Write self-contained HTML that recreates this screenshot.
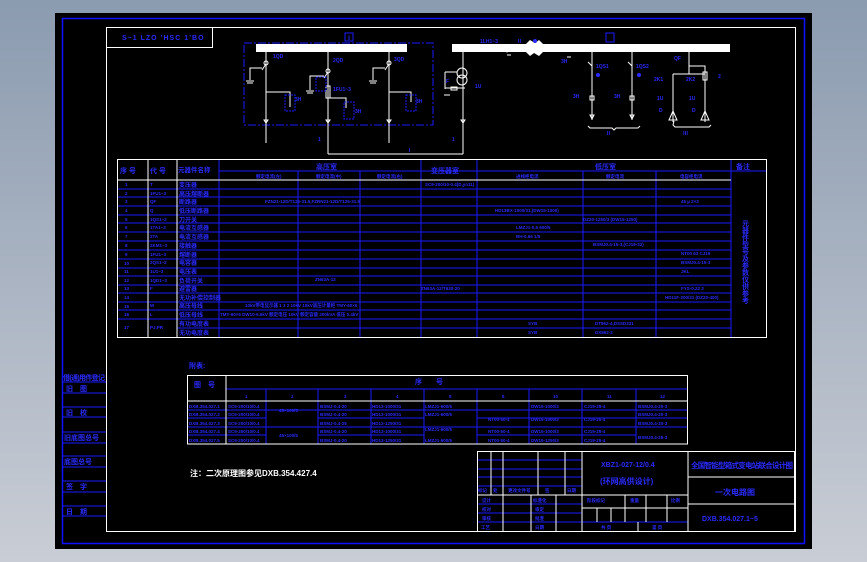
<!DOCTYPE html>
<html><head><meta charset="utf-8"><style>
html,body{margin:0;padding:0;width:867px;height:562px;overflow:hidden;background:linear-gradient(#8b9bb0,#c9cdd5);}
svg{position:absolute;left:0;top:0;font-family:"Liberation Sans","Noto Sans CJK SC",sans-serif;}
svg text{font-weight:bold;}
</style></head><body>
<svg width="867" height="562" viewBox="0 0 867 562">
<rect x="55" y="13" width="757" height="536" fill="#000"/>
<rect x="62.5" y="18.5" width="742" height="525" fill="none" stroke="#1010ff" stroke-width="1.5"/>
<rect x="106.5" y="27.5" width="689" height="504" fill="none" stroke="#fff" stroke-width="1"/>
<rect x="106.5" y="27.5" width="106" height="20" fill="none" stroke="#fff"/>
<text x="122" y="40" font-size="7" fill="#2a2aff" letter-spacing="1">S~1 LZO ’HSC 1’BO</text>

<g stroke="#1a1aff" stroke-width="1">
<line x1="62" y1="382" x2="106" y2="382"/><line x1="62" y1="393" x2="106" y2="393"/>
<line x1="62" y1="407" x2="106" y2="407"/><line x1="62" y1="417" x2="106" y2="417"/>
<line x1="62" y1="432" x2="106" y2="432"/><line x1="62" y1="443" x2="106" y2="443"/>
<line x1="62" y1="456" x2="106" y2="456"/><line x1="62" y1="467" x2="106" y2="467"/>
<line x1="62" y1="481" x2="106" y2="481"/><line x1="62" y1="492" x2="106" y2="492"/>
<line x1="62" y1="506" x2="106" y2="506"/><line x1="62" y1="516" x2="106" y2="516"/>
</g>
<g fill="#2a2aff" font-size="7">
<text x="63" y="380" textLength="42">借(通)用件登记</text>
<text x="66" y="391">旧　图</text>
<text x="66" y="415">旧　校</text>
<text x="64" y="440">旧底图总号</text>
<text x="64" y="464">底图总号</text>
<text x="66" y="489">签　字</text>
<text x="66" y="514">日　期</text>
</g>

<rect x="244" y="43" width="189" height="82" fill="none" stroke="#1a1aff" stroke-dasharray="8,2,2,2"/>
<rect x="256" y="44" width="151" height="8" fill="#fff"/>
<rect x="345" y="33" width="8" height="8" fill="none" stroke="#1a1aff"/>
<text x="346" y="40" font-size="6" fill="#2a2aff">Ⅰ</text>
<g stroke="#fff" fill="none" stroke-width="1">
<line x1="266" y1="52" x2="266" y2="143"/><line x1="328" y1="52" x2="328" y2="154"/><line x1="389" y1="52" x2="389" y2="143"/>
<line x1="328" y1="154" x2="463" y2="154"/><line x1="463" y1="52" x2="463" y2="154"/>
<path d="M266 64 l-4 6 M262 68 h-12 v12 M389 64 l-4 6 M385 68 h-12 v12 M328 72 l-4 6 M324 76 h-14 v14"/>
<path d="M266 92 h24 v15 M389 92 h22 v10 M328 98 h18 v10"/>
<rect x="326" y="86" width="4" height="12"/>
<circle cx="266" cy="63" r="2"/><circle cx="389" cy="63" r="2"/><circle cx="328" cy="71" r="2"/>
<path d="M246 81 h8 M247 83 h6 M369 81 h8 M370 83 h6 M306 91 h8 M307 93 h6"/>
<path d="M264 120 l2 3 l2 -3z M326 120 l2 3 l2 -3z M387 120 l2 3 l2 -3z M461 120 l2 3 l2 -3z"/>
</g>
<g fill="none" stroke="#1a1aff" stroke-dasharray="2,1">
<rect x="285" y="95" width="10" height="16"/><rect x="406" y="95" width="10" height="16"/><rect x="344" y="102" width="10" height="17"/><rect x="316" y="77" width="10" height="14"/>
</g>
<g fill="#2a2aff" font-size="5">
<text x="273" y="58">1QD</text><text x="333" y="62">2QD</text><text x="394" y="61">3QD</text>
<text x="333" y="91">1FU1~3</text><text x="295" y="101">3H</text><text x="355" y="113">3H</text><text x="416" y="103">3H</text>
<text x="318" y="141">1</text><text x="452" y="141">1</text><text x="407" y="152">Ⅰ</text>
</g>

<rect x="452" y="44" width="278" height="8" fill="#fff"/>
<path d="M526 44 l4 -4 l5 3 l4 -3 l4 4 v8 l-4 4 l-5 -3 l-4 3 l-4 -4z" fill="#fff"/>
<circle cx="535" cy="41" r="2" fill="#2a2aff"/>
<rect x="606" y="33" width="8" height="9" fill="none" stroke="#1a1aff"/>
<g stroke="#fff" fill="none">
<circle cx="462" cy="73" r="5"/><circle cx="462" cy="80" r="5"/>
<path d="M445 72 h12 M445 72 v17 M445 88 h20 M444 95 h6"/>
<rect x="451" y="87" width="6" height="3"/>
<line x1="592" y1="52" x2="592" y2="120"/><line x1="632" y1="52" x2="632" y2="120"/>
<path d="M592 66 l-4 -4 M632 66 l-4 -4"/>
<rect x="590" y="96" width="4" height="4"/><rect x="630" y="96" width="4" height="4"/>
<path d="M590 115 l2 4 l2 -4z M630 115 l2 4 l2 -4z"/>
<path d="M588 126 l2 2 h22 l2 2 l2 -2 h22 l2 -2"/>
<line x1="689" y1="52" x2="689" y2="74"/><path d="M689 66 h16 v18 M703 72 h4 v8 h-4z"/>
<path d="M673 74 h32 M673 74 v48 M705 74 v48"/>
<path d="M669 120 l4 -9 l4 9 z M701 120 l4 -9 l4 9z M674 121 l-1 4 l2 2 h34 l2 -2"/>
<path d="M507 48 l-2 2 l2 2 l2 -2z M507 55 h4 M567 57 h4"/>
</g>
<circle cx="598" cy="75" r="2" fill="#2a2aff"/><circle cx="639" cy="75" r="2" fill="#2a2aff"/>
<g fill="#2a2aff" font-size="5">
<text x="480" y="43">1LH1~3</text><text x="517" y="43">Ⅱ</text><text x="561" y="63">3H</text>
<text x="596" y="68">1QS1</text><text x="636" y="68">1QS2</text><text x="573" y="98">3H</text><text x="614" y="98">3H</text>
<text x="475" y="88">1U</text><text x="446" y="83">F</text><text x="674" y="60">QF</text><text x="718" y="78">2</text>
<text x="654" y="81">2K1</text><text x="686" y="81">2K2</text><text x="657" y="100">1U</text><text x="689" y="100">1U</text>
<text x="659" y="112">D</text><text x="692" y="112">D</text><text x="606" y="135">Ⅱ</text><text x="683" y="135">Ⅲ</text>
</g>

<g stroke="#1a1aff" stroke-width="1">
<line x1="219" y1="171" x2="766" y2="171"/>
<line x1="117" y1="189" x2="731" y2="189"/><line x1="117" y1="197" x2="731" y2="197"/><line x1="117" y1="206" x2="731" y2="206"/>
<line x1="117" y1="215" x2="731" y2="215"/><line x1="117" y1="223" x2="731" y2="223"/><line x1="117" y1="232" x2="731" y2="232"/>
<line x1="117" y1="241" x2="731" y2="241"/><line x1="117" y1="250" x2="731" y2="250"/><line x1="117" y1="259" x2="731" y2="259"/>
<line x1="117" y1="268" x2="731" y2="268"/><line x1="117" y1="276" x2="731" y2="276"/><line x1="117" y1="285" x2="731" y2="285"/>
<line x1="117" y1="293" x2="731" y2="293"/><line x1="117" y1="302" x2="731" y2="302"/><line x1="117" y1="310" x2="731" y2="310"/>
<line x1="117" y1="319" x2="731" y2="319"/><line x1="177" y1="328" x2="731" y2="328"/>
<line x1="219" y1="159" x2="219" y2="337"/><line x1="298" y1="171" x2="298" y2="337"/><line x1="360" y1="171" x2="360" y2="337"/>
<line x1="421" y1="159" x2="421" y2="337"/><line x1="477" y1="159" x2="477" y2="337"/><line x1="583" y1="171" x2="583" y2="337"/>
<line x1="656" y1="171" x2="656" y2="337"/><line x1="731" y1="159" x2="731" y2="337"/>
</g>
<g stroke="#fff" fill="none">
<rect x="117.5" y="159.5" width="649" height="178"/>
<line x1="117" y1="180" x2="731" y2="180"/>
<line x1="148" y1="159" x2="148" y2="337"/><line x1="177" y1="159" x2="177" y2="337"/>
</g>
<g fill="#2a2aff" font-size="7">
<text x="120" y="173">序 号</text><text x="150" y="173">代 号</text><text x="178" y="172" font-size="6.5">元器件名称</text>
<text x="316" y="169">高压室</text><text x="431" y="173">变压器室</text><text x="595" y="169">低压室</text><text x="736" y="169">备注</text>
</g>
<g fill="#2a2aff" font-size="4.5">
<text x="256" y="178">额定电流(左)</text><text x="316" y="178">额定电流(中)</text><text x="377" y="178">额定电流(右)</text>
<text x="516" y="178">进线柜电流</text><text x="606" y="178">额定电流</text><text x="680" y="178">电容柜电流</text>
<text x="425" y="186">SC9-200/10-0.4(D,yn11)</text>
<text x="265" y="203">FZN21-12D/T125-31.5,FZRN21-12D/T125-31.5</text>
<text x="681" y="203">45 µ 2×3</text>
<text x="495" y="212">HD13BX-1000/31,(DW15-1000)</text>
<text x="583" y="221">DZ20-1250/3 (DW15-1250)</text>
<text x="516" y="229">LMZJ1-0.5 600/5</text>
<text x="516" y="238">BH-0.66 1/5</text>
<text x="593" y="246">BSMJ0.4-15-3,(CJ19-32)</text>
<text x="681" y="255">NT00 63 CJ19</text><text x="681" y="264">BSMJ0.4-15-3</text><text x="681" y="273">JKL</text>
<text x="315" y="281">ZN63A-12</text><text x="421" y="290">ZN63A-12/T630-20</text><text x="681" y="290">FYS-0.22 3</text>
<text x="665" y="299">HD11F-200/31 (DZ20-400)</text>
<text x="245" y="307">10kV带电显示器 1 3 2 10kV   10kV高压计量柜 TMY-60×6</text>
<text x="220" y="316">TMY-60×6 DW10-6.6kV 额定电压 10kV 额定容量 200kVA 低压 0.4kV</text>
<text x="528" y="325">SYB</text><text x="595" y="325">DT862-4,DSSD331</text>
<text x="528" y="334">SYB</text><text x="595" y="334">DX862-2</text>
<g>
<text x="125" y="186">1</text><text x="125" y="195">2</text><text x="125" y="203">3</text><text x="125" y="212">4</text><text x="125" y="221">5</text><text x="125" y="229">6</text><text x="125" y="238">7</text><text x="125" y="247">8</text><text x="125" y="256">9</text><text x="124" y="265">10</text><text x="124" y="273">11</text><text x="124" y="282">12</text><text x="124" y="290">13</text><text x="124" y="299">14</text><text x="124" y="308">15</text><text x="124" y="316">16</text><text x="124" y="329">17</text>
<text x="150" y="186">T</text><text x="150" y="195">1FU1~3</text><text x="150" y="203">QF</text><text x="150" y="212">Q</text><text x="150" y="221">1QS1~2</text><text x="150" y="229">1TA1~3</text><text x="150" y="238">2TA</text><text x="150" y="247">2KM1~3</text><text x="150" y="256">1FU1~3</text><text x="150" y="264">2QS1~2</text><text x="150" y="273">1U1~3</text><text x="150" y="282">1QD1~3</text><text x="150" y="290">F</text><text x="150" y="307">W</text><text x="150" y="316">L</text><text x="150" y="329">PJ,PR</text>
</g>
<g font-size="6">
<text x="179" y="187">变压器</text><text x="179" y="196">高压熔断器</text><text x="179" y="204">断路器</text><text x="179" y="213">低压断路器</text><text x="179" y="222">刀开关</text><text x="179" y="230">电流互感器</text><text x="179" y="239">电流互感器</text><text x="179" y="248">接触器</text><text x="179" y="257">熔断器</text><text x="179" y="265">电容器</text><text x="179" y="274">电压表</text><text x="179" y="283">负荷开关</text><text x="179" y="291">避雷器</text><text x="179" y="300">无功补偿控制器</text><text x="179" y="308">高压母线</text><text x="179" y="317">低压母线</text><text x="179" y="326">有功电度表</text><text x="179" y="335">无功电度表</text>
</g>
</g>
<text x="745" y="220" font-size="7" fill="#2a2aff" writing-mode="tb">元器件型号及参数仅供参考</text>

<text x="189" y="368" font-size="7" fill="#2a2aff">附表:</text>
<g stroke="#1a1aff">
<line x1="226" y1="389" x2="688" y2="389"/>
<line x1="187" y1="410" x2="688" y2="410"/><line x1="187" y1="418" x2="266" y2="418"/><line x1="318" y1="418" x2="424" y2="418"/><line x1="477" y1="418" x2="688" y2="418"/>
<line x1="187" y1="427" x2="688" y2="427"/><line x1="187" y1="435" x2="266" y2="435"/><line x1="318" y1="435" x2="424" y2="435"/><line x1="477" y1="435" x2="636" y2="435"/>
<line x1="266" y1="389" x2="266" y2="444"/><line x1="318" y1="389" x2="318" y2="444"/><line x1="371" y1="389" x2="371" y2="444"/><line x1="424" y1="389" x2="424" y2="444"/><line x1="477" y1="389" x2="477" y2="444"/><line x1="529" y1="389" x2="529" y2="444"/><line x1="582" y1="389" x2="582" y2="444"/><line x1="636" y1="389" x2="636" y2="444"/>
</g>
<g stroke="#fff" fill="none">
<rect x="187.5" y="375.5" width="500" height="68.5"/>
<line x1="226" y1="375" x2="226" y2="444"/><line x1="187" y1="401" x2="688" y2="401"/>
</g>
<g fill="#2a2aff" font-size="4.5">
<text x="194" y="387" font-size="7">图　号</text><text x="415" y="384" font-size="7">序　　号</text>
<text x="245" y="398">1</text><text x="291" y="398">2</text><text x="344" y="398">3</text><text x="396" y="398">4</text><text x="449" y="398">5</text><text x="502" y="398">6</text><text x="553" y="398">10</text><text x="607" y="398">11</text><text x="660" y="398">12</text>
<text x="189" y="408">DXB.354.027.1</text><text x="189" y="416">DXB.354.027.2</text><text x="189" y="425">DXB.354.027.3</text><text x="189" y="433">DXB.354.027.4</text><text x="189" y="442">DXB.354.027.5</text>
<text x="228" y="408">SC9-200/10/0.4</text><text x="228" y="416">SC9-200/10/0.4</text><text x="228" y="425">SC9-200/10/0.4</text><text x="228" y="433">SC9-250/10/0.4</text><text x="228" y="442">SC9-200/10/0.4</text>
<text x="279" y="412">45×100/5</text><text x="279" y="437">45×100/5</text>
<text x="320" y="408">BSMJ-0.4-20</text><text x="320" y="416">BSMJ-0.4-20</text><text x="320" y="425">BSMJ-0.4-25</text><text x="320" y="433">BSMJ-0.4-20</text><text x="320" y="442">BSMJ-0.4-20</text>
<text x="372" y="408">HD13-1000/31</text><text x="372" y="416">HD13-1000/31</text><text x="372" y="425">HD13-1250/31</text><text x="372" y="433">HD13-1000/31</text><text x="372" y="442">HD13-1250/31</text>
<text x="425" y="408">LMZJ1-600/5</text><text x="425" y="416">LMZJ1-600/5</text><text x="425" y="431">LMZJ1-600/5</text><text x="425" y="442">LMZJ1-600/5</text>
<text x="488" y="421">NT00-50-4</text><text x="488" y="433">NT00-50-4</text><text x="488" y="442">NT00-50-4</text>
<text x="531" y="408">DW15-1000/3</text><text x="531" y="421">DW15-1000/3</text><text x="531" y="433">DW15-1000/3</text><text x="531" y="442">DW15-1250/3</text>
<text x="584" y="408">CJ19-25-4</text><text x="584" y="421">CJ19-25-4</text><text x="584" y="433">CJ19-25-4</text><text x="584" y="442">CJ19-25-4</text>
<text x="638" y="408">BSMJ0.4-20-3</text><text x="638" y="416">BSMJ0.4-20-3</text><text x="638" y="425">BSMJ0.4-20-3</text><text x="638" y="439">BSMJ0.4-25-3</text>
</g>
<text x="190" y="476" font-size="8" fill="#fff">注：二次原理图参见DXB.354.427.4</text>

<g stroke="#1a1aff">
<line x1="477" y1="460" x2="582" y2="460"/><line x1="477" y1="469" x2="582" y2="469"/><line x1="477" y1="477" x2="582" y2="477"/><line x1="477" y1="486" x2="582" y2="486"/>
<line x1="477" y1="504" x2="582" y2="504"/><line x1="477" y1="513" x2="582" y2="513"/><line x1="477" y1="522" x2="688" y2="522"/>
</g>
<g stroke="#fff" fill="none">
<rect x="477.5" y="451.5" width="317" height="80"/>
<line x1="491" y1="451" x2="491" y2="495"/><line x1="503" y1="451" x2="503" y2="531"/><line x1="538" y1="451" x2="538" y2="495"/><line x1="565" y1="451" x2="565" y2="495"/>
<line x1="531" y1="495" x2="531" y2="531"/><line x1="556" y1="495" x2="556" y2="531"/>
<line x1="582" y1="451" x2="582" y2="531"/><line x1="688" y1="451" x2="688" y2="531"/>
<line x1="477" y1="495" x2="688" y2="495"/><line x1="688" y1="477" x2="795" y2="477"/><line x1="688" y1="504" x2="795" y2="504"/>
<line x1="582" y1="508" x2="688" y2="508"/>
<line x1="625" y1="495" x2="625" y2="522"/><line x1="646" y1="495" x2="646" y2="522"/><line x1="667" y1="495" x2="667" y2="522"/>
<line x1="597" y1="508" x2="597" y2="522"/><line x1="611" y1="508" x2="611" y2="522"/><line x1="638" y1="522" x2="638" y2="531"/>
</g>
<g fill="#2a2aff">
<text x="601" y="467" font-size="7">XBZ1-027-12/0.4</text>
<text x="600" y="484" font-size="8">(环网高供设计)</text>
<text x="691" y="468" font-size="7.5" textLength="102">全国智能型箱式变电站联合设计图</text>
<text x="715" y="495" font-size="8">一次电路图</text>
<text x="702" y="521" font-size="7">DXB.354.027.1~5</text>
<g font-size="4.5">
<text x="478" y="492">标记</text><text x="493" y="492">处</text><text x="508" y="492">更改文件号</text><text x="545" y="492">签</text><text x="567" y="492">日期</text>
<text x="482" y="502">设计</text><text x="482" y="511">校对</text><text x="482" y="520">审核</text><text x="481" y="529">工艺</text>
<text x="533" y="502">标准化</text><text x="535" y="511">审定</text><text x="535" y="520">批准</text><text x="535" y="529">日期</text>
<text x="587" y="502">阶段标记</text><text x="630" y="502">重量</text><text x="671" y="502">比例</text>
<text x="601" y="529">共 页</text><text x="652" y="529">第 页</text>
</g>
</g>
</svg>
</body></html>
